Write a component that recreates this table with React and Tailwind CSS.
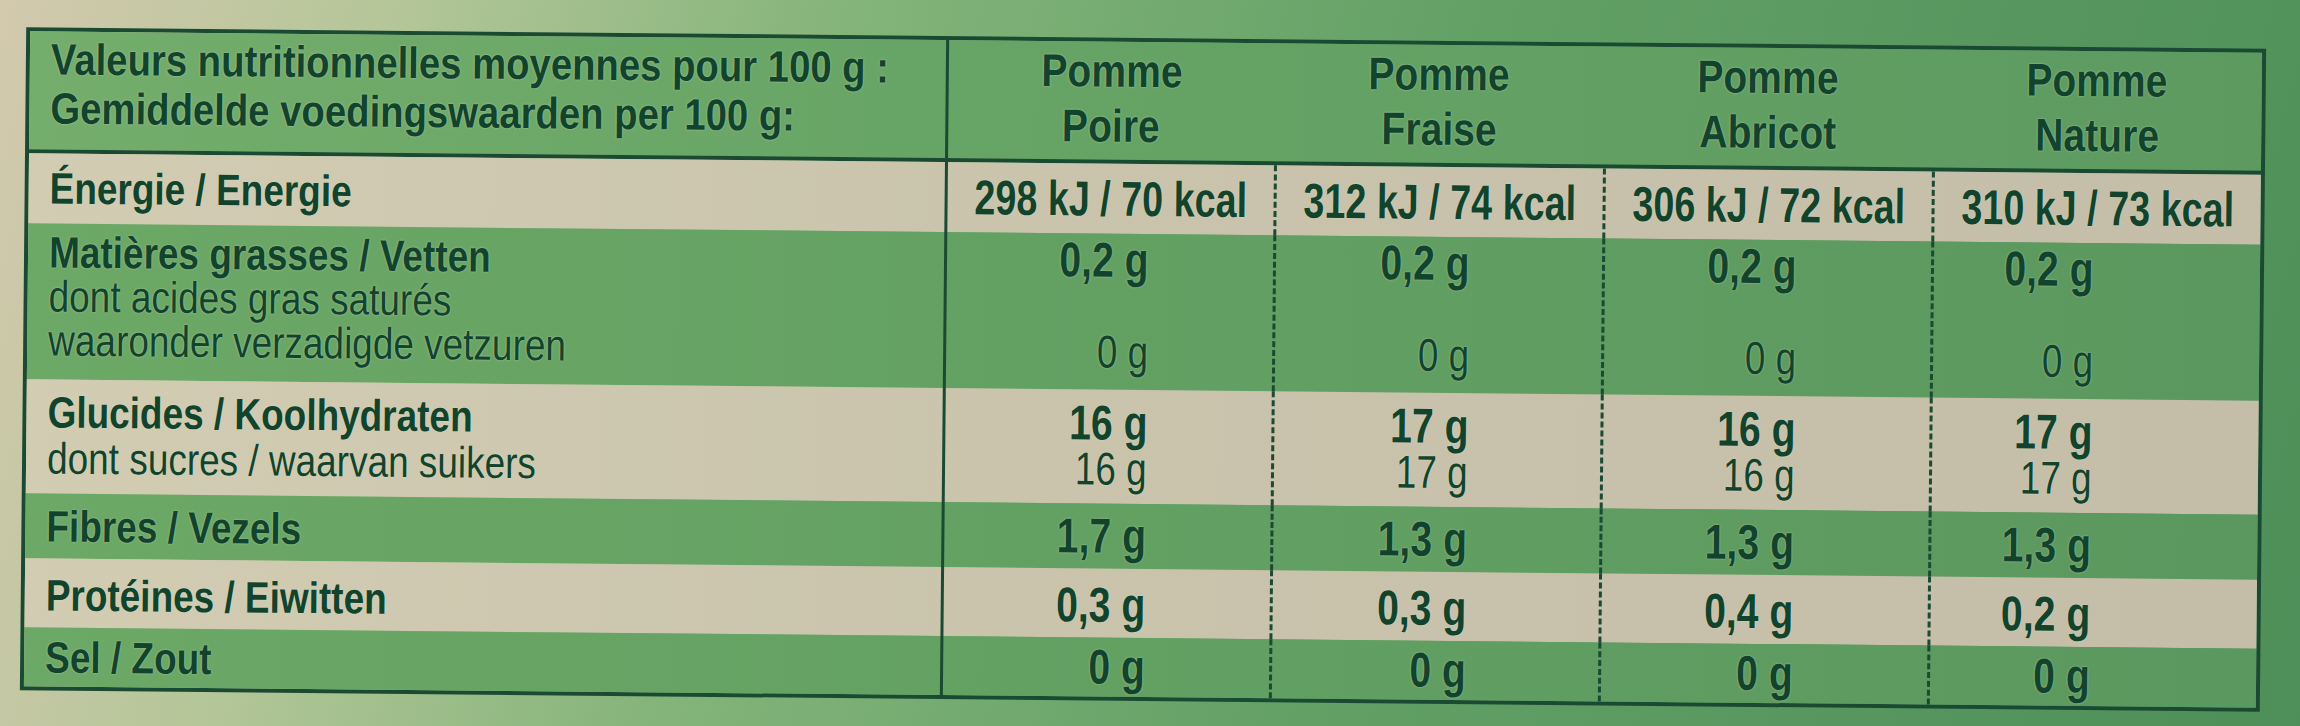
const line = "border-[#1b4a33]";
const green = "bg-[linear-gradient(90deg,#6ca866_0%,#63a163_45%,#5a985f_100%)]";
const beige = "bg-[linear-gradient(90deg,#d1ccb2_0%,#cac4ad_45%,#c4bda8_100%)]";
const cols = "grid grid-cols-[916px_repeat(4,329px)]";

// right padding of the value block in each column
const pads = ["pr-[124px]", "pr-[132px]", "pr-[134px]", "pr-[166px]"];
const seps = [
  "border-l-[3px] border-solid",
  "border-l-[3px] border-dashed",
  "border-l-[3px] border-dashed",
  "border-l-[3px] border-dashed",
];

const Lab = ({ children, bold, lh = "leading-[44px]" }) => (
  <span
    className={`block w-max whitespace-nowrap origin-left scale-x-[0.84] text-[44px] ${lh} ${
      bold ? "font-bold" : "font-normal"
    }`}
  >
    {children}
  </span>
);

const Val = ({ children, bold = true, lh = "leading-[44px]", className = "" }) => (
  <span
    className={`block w-max whitespace-nowrap origin-right ${
      bold ? "text-[49px] font-bold scale-x-[0.8]" : "text-[46px] font-normal scale-x-[0.8]"
    } ${lh} ${className}`}
  >
    {children}
  </span>
);

const Row = ({ bg, h, label, labelClass, cellClass, values }) => (
  <div className={`${cols} ${h} ${bg}`}>
    <div className={`pl-[21px] ${labelClass}`}>{label}</div>
    {values.map((v, i) => (
      <div key={i} className={`${seps[i]} ${line} ${pads[i]} ${cellClass}`}>
        {v}
      </div>
    ))}
  </div>
);

const fruits = [
  ["Pomme", "Poire"],
  ["Pomme", "Fraise"],
  ["Pomme", "Abricot"],
  ["Pomme", "Nature"],
];

const energy = ["298 kJ / 70 kcal", "312 kJ / 74 kcal", "306 kJ / 72 kcal", "310 kJ / 73 kcal"];

export default function App() {
  return (
    <div className="w-[2300px] h-[726px] overflow-hidden bg-[linear-gradient(105deg,#d3c9ae_0%,#b4c698_16%,#84b47a_34%,#62a065_60%,#4e8f59_100%)] font-['Liberation_Sans',Arial,sans-serif] text-[#11432d] [text-shadow:0_0_2px_rgba(225,235,205,0.7)]">
      <div className={`ml-[23px] mt-[38px] w-[2240px] rotate-[0.55deg] border-4 ${line}`}>
        {/* header */}
        <div className={`${cols} h-[122px] border-b-4 ${line} bg-[linear-gradient(90deg,#74ad6c_0%,#67a566_40%,#5c9a60_100%)]`}>
          <div className="pl-[21px] pt-[3px]">
            <span className="block w-max whitespace-nowrap origin-left scale-x-[0.87] text-[44px] font-bold leading-[49px]">
              Valeurs nutritionnelles moyennes pour 100 g :
            </span>
            <span className="block w-max whitespace-nowrap origin-left scale-x-[0.87] text-[44px] font-bold leading-[49px]">
              Gemiddelde voedingswaarden per 100 g:
            </span>
          </div>
          {fruits.map(([a, b], i) => (
            <div
              key={b}
              className={`${i === 0 ? "border-l-[3px] border-solid" : ""} ${line} flex flex-col items-center pt-[2px]`}
            >
              <span className="block w-max origin-center scale-x-[0.85] text-[46px] font-bold leading-[55px]">{a}</span>
              <span className="block w-max origin-center scale-x-[0.85] text-[46px] font-bold leading-[55px]">{b}</span>
            </div>
          ))}
        </div>

        {/* energy */}
        <div className={`${cols} h-[70px] ${beige}`}>
          <div className="pl-[21px] flex items-center">
            <Lab bold>Énergie / Energie</Lab>
          </div>
          {energy.map((e, i) => (
            <div key={e} className={`${seps[i]} ${line} flex items-center justify-center overflow-visible`}>
              <span className="block w-max whitespace-nowrap origin-center scale-x-[0.77] text-[49px] font-bold leading-[49px]">
                {e}
              </span>
            </div>
          ))}
        </div>

        <Row
          bg={green}
          h="h-[156px]"
          labelClass="pt-[7px]"
          cellClass="flex flex-col items-end pt-[4px]"
          label={
            <>
              <Lab bold>Matières grasses / Vetten</Lab>
              <Lab>dont acides gras saturés</Lab>
              <Lab>waaronder verzadigde vetzuren</Lab>
            </>
          }
          values={[0, 1, 2, 3].map((k) => (
            <>
              <Val key={"a" + k}>0,2 g</Val>
              <Val key={"b" + k} bold={false} className="mt-[48px]">
                0 g
              </Val>
            </>
          ))}
        />

        <Row
          bg={beige}
          h="h-[114px]"
          labelClass="pt-[10px]"
          cellClass="flex flex-col items-end pt-[10px]"
          label={
            <>
              <Lab bold lh="leading-[46px]">
                Glucides / Koolhydraten
              </Lab>
              <Lab lh="leading-[46px]">dont sucres / waarvan suikers</Lab>
            </>
          }
          values={["16 g", "17 g", "16 g", "17 g"].map((v) => (
            <>
              <Val lh="leading-[46px]">{v}</Val>
              <Val bold={false} lh="leading-[46px]">
                {v}
              </Val>
            </>
          ))}
        />

        <Row
          bg={green}
          h="h-[65px]"
          labelClass="flex items-center"
          cellClass="flex items-center justify-end"
          label={<Lab bold>Fibres / Vezels</Lab>}
          values={["1,7 g", "1,3 g", "1,3 g", "1,3 g"].map((v) => (
            <Val lh="leading-[49px]">{v}</Val>
          ))}
        />

        <Row
          bg={beige}
          h="h-[69px]"
          labelClass="flex items-center pt-[4px]"
          cellClass="flex items-center justify-end pt-[4px]"
          label={<Lab bold>Protéines / Eiwitten</Lab>}
          values={["0,3 g", "0,3 g", "0,4 g", "0,2 g"].map((v) => (
            <Val lh="leading-[49px]">{v}</Val>
          ))}
        />

        <Row
          bg={green}
          h="h-[59px]"
          labelClass="flex items-center"
          cellClass="flex items-center justify-end"
          label={<Lab bold>Sel / Zout</Lab>}
          values={["0 g", "0 g", "0 g", "0 g"].map((v) => (
            <Val lh="leading-[49px]">{v}</Val>
          ))}
        />
      </div>
    </div>
  );
}
